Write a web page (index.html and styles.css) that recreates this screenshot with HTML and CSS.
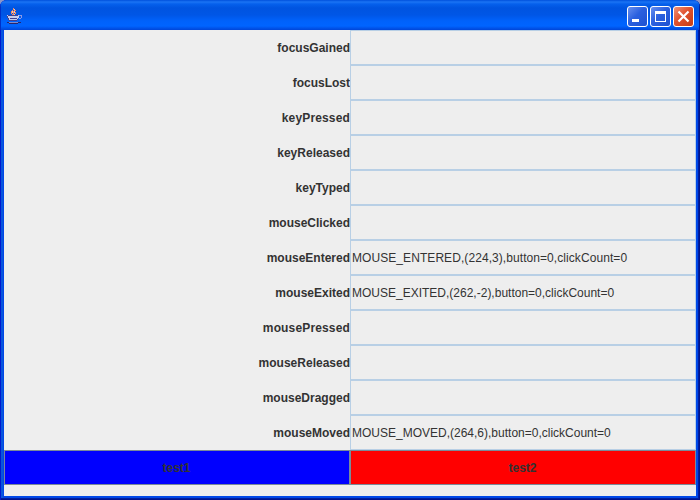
FILE: index.html
```html
<!DOCTYPE html>
<html lang="en">
<head>
<meta charset="utf-8">
<title>Event window</title>
<link rel="stylesheet" href="styles.css">
</head>
<body>
<div class="window">
  <header class="titlebar">
    <svg class="java" width="16" height="16" viewBox="0 0 16 16" shape-rendering="crispEdges">
      <path d="M0 7h12v3h-1v2h-1v1H2v-1H1v-2H0z" fill="#c6cdf0"/>
      <path d="M1 7h10v1H1zM0 8h1v2H0zM1 10h1v2H1zM2 12h8v1H2zM10 11h1v1h-1zM3 10h7v1H3z" fill="#414190"/>
      <path d="M12 7h3v1h-3zM14 8h1v2h-1zM12 10h2v1h-2z" fill="#8c98e4"/>
      <path d="M0 14h2v1H0zM2 15h9v1H2zM11 14h3v1h-3z" fill="#25256e"/>
      <path d="M2 14h9v1H2z" fill="#8088c8"/>
      <path d="M6 0h1v2H6zM5 2h1v1H5zM4 3h1v3H4zM5 6h2v1H5zM7 2h2v1H7zM6 3h1v3H6zM8 4h1v2H8z" fill="#f28a63"/>
      <path d="M7 1h1v1H7zM5 3h1v2H5zM7 3h1v2H7zM7 6h1v1H7z" fill="#f5c4b2"/>
    </svg>
    <div class="controls">
      <svg width="21" height="21" viewBox="0 0 21 21">
        <defs>
          <linearGradient id="b" x2="1" y2="1"><stop stop-color="#6b92f0"/><stop offset=".45" stop-color="#2b60df"/><stop offset="1" stop-color="#1d50d0"/></linearGradient>
          <linearGradient id="r" x2="1" y2="1"><stop stop-color="#ef967c"/><stop offset=".45" stop-color="#e0522f"/><stop offset="1" stop-color="#c33c14"/></linearGradient>
        </defs>
        <rect class="ctl" x=".5" y=".5" width="20" height="20" rx="2.5" fill="url(#b)"/><path d="M5 13h7v3H5z" fill="#fff"/></svg>
      <svg width="21" height="21" viewBox="0 0 21 21"><rect class="ctl" x=".5" y=".5" width="20" height="20" rx="2.5" fill="url(#b)"/><path d="M5 5h11v11H5zM6 8v7h9V8z" fill="#fff" fill-rule="evenodd"/></svg>
      <svg width="21" height="21" viewBox="0 0 21 21"><rect class="ctl" x=".5" y=".5" width="20" height="20" rx="2.5" fill="url(#r)"/><path d="M5.5 5.5l10 10M15.5 5.5l-10 10" stroke="#fff" stroke-width="2.2"/></svg>
    </div>
  </header>
  <main class="grid">
    <div class="label">focusGained</div><div class="field"></div>
    <div class="label">focusLost</div><div class="field"></div>
    <div class="label wide">keyPressed</div><div class="field"></div>
    <div class="label">keyReleased</div><div class="field"></div>
    <div class="label">keyTyped</div><div class="field"></div>
    <div class="label">mouseClicked</div><div class="field"></div>
    <div class="label">mouseEntered</div><div class="field entered">MOUSE_ENTERED,(224,3),button=0,clickCount=0</div>
    <div class="label">mouseExited</div><div class="field">MOUSE_EXITED,(262,-2),button=0,clickCount=0</div>
    <div class="label wide">mousePressed</div><div class="field"></div>
    <div class="label">mouseReleased</div><div class="field"></div>
    <div class="label">mouseDragged</div><div class="field"></div>
    <div class="label">mouseMoved</div><div class="field">MOUSE_MOVED,(264,6),button=0,clickCount=0</div>
    <div class="button blue">test1</div><div class="button red">test2</div>
  </main>
</div>
</body>
</html>
```
FILE: styles.css
```css
* { box-sizing: border-box; }
body { margin: 0; background: #8c96c8; font-family: "Liberation Sans", Arial, sans-serif; font-size: 12px; color: #333; }
.window {
  width: 700px; height: 500px; padding: 0 4px 4px; overflow: hidden;
  border-radius: 7px 7px 0 0;
  background: #0048e8;
  box-shadow: inset 1px 0 #0019cf, inset -1px -1px #00138c, inset -2px -2px #001ea0, inset 3px 0 #0855dd;
}
.titlebar {
  height: 30px; margin: 0 -4px; padding: 6px 6px 0 7px; display: flex; justify-content: space-between;
  background: linear-gradient(#0050dc 0, #1b74f4 2px, #0560ec 4px, #0054e0 8px, #0056e6 15px, #0062fb 21px, #0064ff 26px, #0045d8 30px);
  box-shadow: inset 1px 0 #0030c8, inset -1px 0 #0020a0;
}
.java { margin-top: 2px; }
.controls { display: flex; gap: 2px; }
.ctl { stroke: #fff; }
.grid { display: grid; grid-template-columns: 346px 346px; grid-auto-rows: 35px; height: 466px; background: #eee; }
.label { padding-top: 1px; font-weight: bold; text-align: right; line-height: 35px; }
.wide { letter-spacing: .15px; }
.field { border: 1px solid #b8cfe5; padding: 1px 0 0 1px; line-height: 33px; white-space: nowrap; }
.entered { letter-spacing: .07px; }
.button { border: 1px solid #7a8a99; padding: 1px 1px 0 0; line-height: 33px; text-align: center; font-weight: bold; }
.blue { background: #00f; }
.red { background: #f00; }
```
